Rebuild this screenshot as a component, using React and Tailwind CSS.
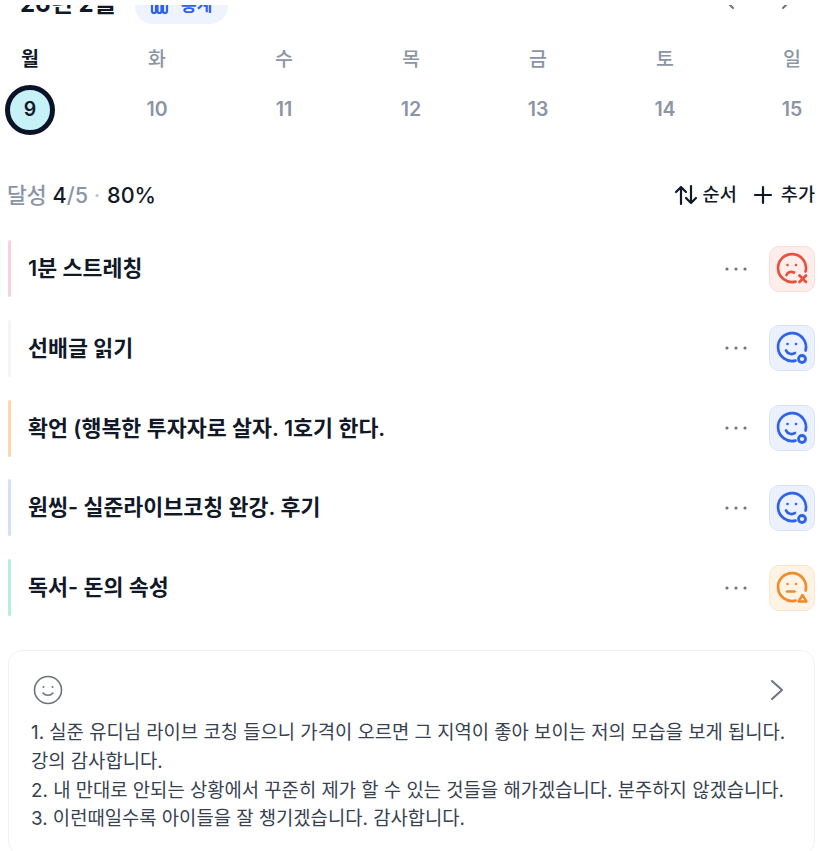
const font = { fontFamily: 'Inter, "Noto Sans CJK KR", sans-serif' };

const days = [
  ['월', 9],
  ['화', 10],
  ['수', 11],
  ['목', 12],
  ['금', 13],
  ['토', 14],
  ['일', 15],
];

const Face = ({ color, mood }) => (
  <svg width="34" height="34" viewBox="0 0 34 34" fill="none" stroke={color} strokeWidth="2.700" strokeLinecap="round" strokeLinejoin="round">
    <path d="M20.5 29.6A14 14 0 1 1 30.6 19.5" />
    <circle cx="12.500" cy="13" r="1.300" fill={color} stroke="none" />
    <circle cx="21" cy="13" r="1.300" fill={color} stroke="none" />
    {mood === 'x' && (
      <>
        <path d="M11.500 23c1.500-3 5-4 7.500-2.500" />
        <path d="M24.500 23.500l6.500 6.500M31 23.500l-6.500 6.500" strokeWidth="2.800" />
      </>
    )}
    {mood === 'o' && (
      <>
        <path d="M11 19.500c1.500 3.500 6 4.500 9 2.500" />
        <circle cx="27" cy="28" r="3.500" strokeWidth="2.800" />
      </>
    )}
    {mood === 'tri' && (
      <>
        <path d="M12 20.500h7.500" />
        <path d="M27.500 24l4 6.500h-8z" fill="#fef3e4" strokeWidth="2.400" />
      </>
    )}
  </svg>
);

const tiles = {
  x: { cls: 'bg-[#fdeeeb] border-[#fbdcd6]', color: '#e5533d' },
  o: { cls: 'bg-[#ebf1fe] border-[#d9e3fb]', color: '#2f62ea' },
  tri: { cls: 'bg-[#fef3e4] border-[#fde5c8]', color: '#f08c28' },
};

const tasks = [
  { title: '1분 스트레칭', bar: 'bg-[#fbcfe8]', mood: 'x' },
  { title: '선배글 읽기', bar: 'bg-[#f3f4f6]', mood: 'o' },
  { title: '확언 (행복한 투자자로 살자. 1호기 한다.', bar: 'bg-[#fed7aa]', mood: 'o' },
  { title: '원씽- 실준라이브코칭 완강. 후기', bar: 'bg-[#d3e0fb]', mood: 'o' },
  { title: '독서- 돈의 속성', bar: 'bg-[#b5efd8]', mood: 'tri' },
];

export default function App() {
  return (
    <div className="relative h-[851px] overflow-hidden bg-white" style={font}>
      {/* scrolled page: header is cut off under the top edge */}
      <div className="absolute inset-x-0 top-0 z-10 h-[5px] bg-white" />

      <div className="-mt-[12px] pr-[12px] pl-[8px]">
        <div className="flex h-[36px] items-center">
          <span className="-mt-[4px] ml-[12px] text-[24px] font-bold text-[#111827]">26년 2월</span>
          <span className="ml-[19px] flex h-[36px] w-[93px] items-center justify-center gap-[12px] rounded-full bg-[#eef3fe] text-[17px] font-semibold text-[#2f62ea]">
            <svg width="19" height="20" viewBox="0 0 19 20" fill="none" stroke="#2f62ea" strokeWidth="2.200">
              <path d="M2 4v11a2 2 0 0 0 4 0V4M7.500 4v11a2 2 0 0 0 4 0V4M13 4v11a2 2 0 0 0 4 0V4" />
            </svg>
            <span>통계</span>
          </span>
          <svg className="-mt-[10px] ml-auto" width="12" height="18" viewBox="0 0 12 18" fill="none" stroke="#6b7280" strokeWidth="2" strokeLinecap="round" strokeLinejoin="round">
            <path d="M10 2 3 9l7 7" />
          </svg>
          <svg className="-mt-[10px] mr-[23px] ml-[45px]" width="12" height="18" viewBox="0 0 12 18" fill="none" stroke="#6b7280" strokeWidth="2" strokeLinecap="round" strokeLinejoin="round">
            <path d="M3 2l7 7-7 7" />
          </svg>
        </div>

        <div className="mt-[21px] -mr-[2px] -ml-[3px] flex justify-between">
          {days.map(([label, num], i) => (
            <div key={label} className="flex w-[50px] flex-col items-center">
              <span className={`text-[19.5px] leading-[28px] ${i === 0 ? 'font-bold text-[#111827]' : 'font-medium text-[#8b95a5]'}`}>{label}</span>
              <span className={`mt-[12px] flex h-[50px] w-[50px] items-center justify-center rounded-full text-[19.5px] font-semibold ${i === 0 ? 'border-[5px] border-[#0b1329] bg-[#c5f1f7] text-[#111827]' : 'text-[#8b95a5]'}`}>{num}</span>
            </div>
          ))}
        </div>

        <div className="mt-[44px] flex h-[32px] items-center justify-between">
          <div className="-ml-[1px] text-[21.6px] font-medium text-[#111827]">
            <span className="text-[#8b95a5]">달성 </span>
            4<span className="text-[#8b95a5]">/5 </span>
            <span className="text-[#c3c8d0]">·</span> <span className="ml-[1px]">80%</span>
          </div>
          <div className="flex items-center text-[18.6px] font-medium text-[#111827]">
            <svg width="26" height="24" viewBox="0 0 26 24" fill="none" stroke="#111827" strokeWidth="2.200" strokeLinecap="round" strokeLinejoin="round">
              <path d="M8 21V4M3 9l5-5 5 5M18 3v17M13 15l5 5 5-5" />
            </svg>
            <span className="ml-[4px]">순서</span>
            <svg className="ml-[15px]" width="22" height="22" viewBox="0 0 22 22" fill="none" stroke="#111827" strokeWidth="2.200" strokeLinecap="round">
              <path d="M11 3v16M3 11h16" />
            </svg>
            <span className="ml-[7px]">추가</span>
          </div>
        </div>

        <div className="mt-[29px] flex flex-col gap-[22.75px]">
          {tasks.map((t) => (
            <div key={t.title} className="flex h-[57px] items-center">
              <div className={`h-full w-[3px] rounded-full ${t.bar}`} />
              <span className="ml-[17px] text-[21.7px] font-semibold text-[#111827]">{t.title}</span>
              <svg className="ml-auto" width="24" height="6" viewBox="0 0 24 6" fill="#6b7280">
                <circle cx="3" cy="3" r="1.600" />
                <circle cx="12" cy="3" r="1.600" />
                <circle cx="21" cy="3" r="1.600" />
              </svg>
              <div className={`ml-[21px] flex h-[46px] w-[46px] items-center justify-center rounded-[10px] border ${tiles[t.mood].cls}`}>
                <Face color={tiles[t.mood].color} mood={t.mood} />
              </div>
            </div>
          ))}
        </div>

        <div className="mt-[34px] rounded-[14px] border border-[#f0f1f3] px-[22px] pt-[24px] pb-[20px]">
          <div className="flex items-center justify-between">
            <svg className="ml-[2px]" width="30" height="30" viewBox="0 0 30 30" fill="none" stroke="#6b7280" strokeWidth="1.600" strokeLinecap="round">
              <circle cx="15" cy="15" r="13.500" />
              <circle cx="10.500" cy="12" r="1" fill="#6b7280" stroke="none" />
              <circle cx="19.500" cy="12" r="1" fill="#6b7280" stroke="none" />
              <path d="M10 18c2.500 3 7.500 3 10 0" />
            </svg>
            <svg className="mr-[8px]" width="14" height="22" viewBox="0 0 14 22" fill="none" stroke="#6b7280" strokeWidth="2" strokeLinecap="round" strokeLinejoin="round">
              <path d="M2 2l10 9-10 9" />
            </svg>
          </div>
          <div className="mt-[14px] text-[18.8px] leading-[28.800px] text-[#374151]">
            <p>1. 실준 유디님 라이브 코칭 들으니 가격이 오르면 그 지역이 좋아 보이는 저의 모습을 보게 됩니다. 강의 감사합니다.</p>
            <p>2. 내 만대로 안되는 상황에서 꾸준히 제가 할 수 있는 것들을 해가겠습니다. 분주하지 않겠습니다.</p>
            <p>3. 이런때일수록 아이들을 잘 챙기겠습니다. 감사합니다.</p>
          </div>
        </div>
      </div>
    </div>
  );
}
